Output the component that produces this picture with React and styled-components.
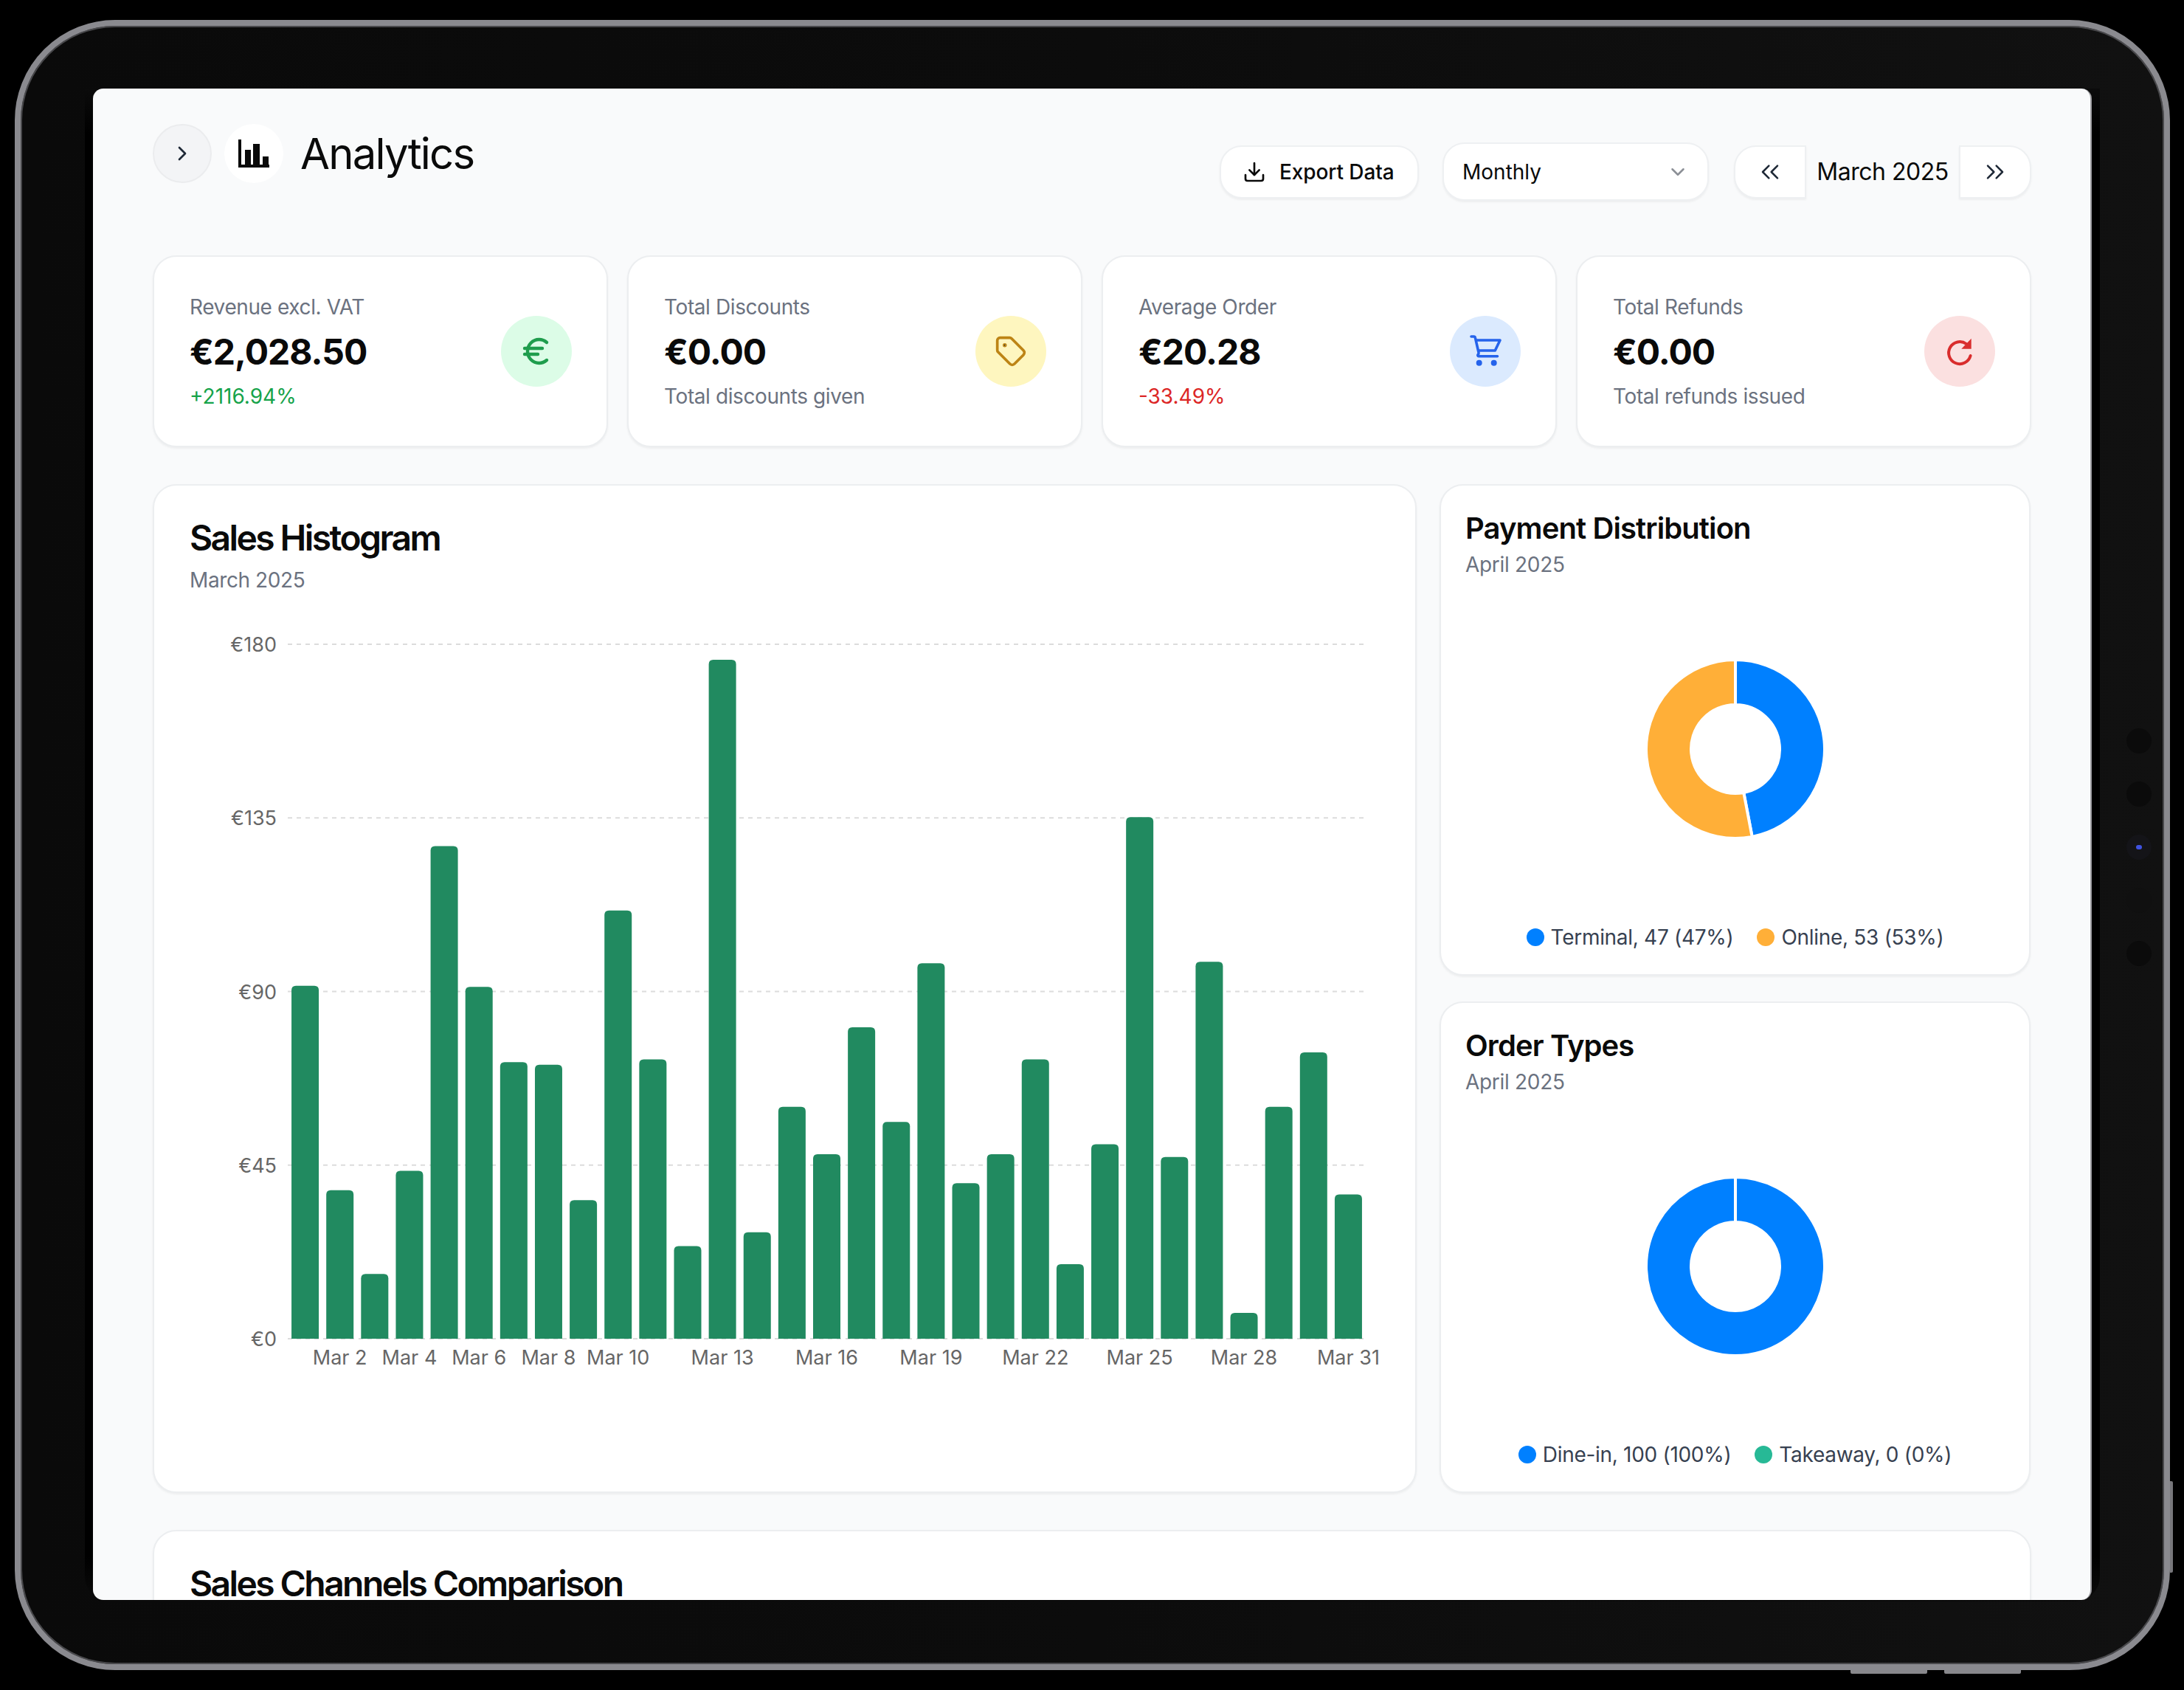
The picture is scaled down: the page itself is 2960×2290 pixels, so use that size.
import React from 'react'
import styled, { createGlobalStyle } from 'styled-components'
import {
    ChevronRight,
    ChevronDown,
    ChevronsLeft,
    ChevronsRight,
    Download,
    Euro,
    Tag,
} from 'lucide-react'

const dailySales = [
    91.5, 38.5, 16.8, 43.5, 127.7, 91.2, 71.7, 71, 35.9, 111, 72.4, 24, 176, 27.6, 60.1, 47.8,
    80.7, 56.2, 97.3, 40.3, 47.8, 72.4, 19.3, 50.4, 135.2, 47.1, 97.7, 6.7, 60.1, 74.2, 37.4,
]
const dayTicks = [2, 4, 6, 8, 10, 13, 16, 19, 22, 25, 28, 31]
const euroTicks = [180, 135, 90, 45, 0]

const BLUE = '#0080ff'
const ORANGE = '#ffaf38'
const TEAL = '#27b996'

const RefreshIcon = () => (
    <svg width="48" height="48" viewBox="0 0 48 48" fill="none">
        <path d="M33 14A15 15 0 1 0 38.6 30" stroke="#d92d2d" strokeWidth="4" strokeLinecap="round" />
        <path d="M39.7 6.7V20.7H26.3Z" fill="#d92d2d" />
    </svg>
)

const CartIcon = () => (
    <svg width="48" height="48" viewBox="0 0 48 48" fill="none" stroke="#2563eb" strokeWidth="3.6" strokeLinecap="round" strokeLinejoin="round">
        <path d="M5 4H8.4a2 2 0 0 1 2 1.6L15 25.5c.3 1.5-.6 2.8-1 3.2-.5.6-.2 2 1 2H40.5" />
        <path d="M11.7 9H44L37.3 23H15" />
        <circle cx="15.7" cy="39.7" r="2.2" fill="#2563eb" />
        <circle cx="35.7" cy="39.7" r="2.2" fill="#2563eb" />
    </svg>
)

const AnalyticsIcon = () => (
    <svg width="42" height="38" viewBox="0 0 42 38" fill="#0a0a0a">
        <path d="M0 0H4V34H42V38H0Z" />
        <rect x="9" y="14" width="8" height="22" />
        <rect x="20" y="6" width="9" height="30" />
        <rect x="33" y="23" width="8" height="13" />
    </svg>
)

const stats = [
    {
        label: 'Revenue excl. VAT',
        value: '€2,028.50',
        note: '+2116.94%',
        tone: 'up',
        bg: '#dcfce7',
        icon: <Euro size={48} color="#1f9d4d" strokeWidth={2.2} />,
    },
    {
        label: 'Total Discounts',
        value: '€0.00',
        note: 'Total discounts given',
        bg: '#fef6bf',
        icon: <Tag size={44} color="#bd8415" />,
    },
    {
        label: 'Average Order',
        value: '€20.28',
        note: '-33.49%',
        tone: 'down',
        bg: '#dbeafe',
        icon: <CartIcon />,
    },
    {
        label: 'Total Refunds',
        value: '€0.00',
        note: 'Total refunds issued',
        bg: '#fbe0e0',
        icon: <RefreshIcon />,
    },
]

const SalesChart = () => {
    const left = 133
    const right = 1594
    const top = 52
    const bottom = 993
    const band = (right - left) / dailySales.length
    const barWidth = 37
    const toY = v => bottom - (v / 180) * (bottom - top)
    const center = day => left + band * (day - 0.5)

    return (
        <ChartSvg viewBox="0 0 1612 1060">
            {euroTicks.map(t => (
                <g key={t}>
                    <line
                        x1={left}
                        x2={right}
                        y1={toY(t)}
                        y2={toY(t)}
                        stroke="#dcdcdc"
                        strokeWidth="2"
                        strokeDasharray="6 6"
                    />
                    <text x={118} y={toY(t) + 10} textAnchor="end">
                        €{t}
                    </text>
                </g>
            ))}
            {dailySales.map((v, i) => {
                const x = center(i + 1) - barWidth / 2
                const y = toY(v)
                return (
                    <path
                        key={i}
                        fill="#218a60"
                        d={`M${x} ${bottom}V${y + 6}Q${x} ${y} ${x + 6} ${y}H${x + barWidth - 6}Q${x + barWidth} ${y} ${x + barWidth} ${y + 6}V${bottom}Z`}
                    />
                )
            })}
            {dayTicks.map(d => (
                <text key={d} x={center(d)} y={bottom + 35} textAnchor="middle">
                    Mar {d}
                </text>
            ))}
        </ChartSvg>
    )
}

const Donut = ({ slices }) => {
    const total = slices.reduce((sum, s) => sum + s.value, 0)
    const point = (r, a) => {
        const rad = (a - 90) * (Math.PI / 180)
        return `${120 + r * Math.cos(rad)} ${120 + r * Math.sin(rad)}`
    }
    let angle = 0

    return (
        <svg width="240" height="240" viewBox="0 0 240 240">
            {slices
                .filter(s => s.value > 0)
                .map(s => {
                    const sweep = Math.min((s.value / total) * 360, 359.99)
                    const start = angle
                    const end = angle + sweep
                    angle = end
                    const big = sweep > 180 ? 1 : 0
                    return (
                        <path
                            key={s.name}
                            fill={s.color}
                            stroke="#fff"
                            strokeWidth="4"
                            d={`M${point(121, start)}A121 121 0 ${big} 1 ${point(121, end)}L${point(60, end)}A60 60 0 ${big} 0 ${point(60, start)}Z`}
                        />
                    )
                })}
        </svg>
    )
}

const PieCard = ({ title, slices }) => {
    const total = slices.reduce((sum, s) => sum + s.value, 0)

    return (
        <SideCard>
            <SideTitle>{title}</SideTitle>
            <SideDate>April 2025</SideDate>
            <DonutArea>
                <Donut slices={slices} />
            </DonutArea>
            <Legend>
                {slices.map(s => (
                    <LegendItem key={s.name}>
                        <Dot $color={s.color} />
                        {s.name}, {s.value} ({Math.round((s.value / total) * 100)}%)
                    </LegendItem>
                ))}
            </Legend>
        </SideCard>
    )
}

const App = () => (
    <Page>
        <GlobalStyle />
        <Device>
            <ScreenRing>
                <Screen>
                    <Header>
                        <TitleGroup>
                            <CollapseButton>
                                <ChevronRight size={32} color="#1f2937" />
                            </CollapseButton>
                            <TitleIcon>
                                <AnalyticsIcon />
                            </TitleIcon>
                            <PageTitle>Analytics</PageTitle>
                        </TitleGroup>
                        <Controls>
                            <ExportButton>
                                <Download size={32} />
                                Export Data
                            </ExportButton>
                            <PeriodSelect>
                                Monthly
                                <ChevronDown size={30} color="#8b8f96" />
                            </PeriodSelect>
                            <DatePager>
                                <PagerButton $side="left">
                                    <ChevronsLeft size={40} color="#1f2937" strokeWidth={1.5} />
                                </PagerButton>
                                <PagerLabel>March 2025</PagerLabel>
                                <PagerButton $side="right">
                                    <ChevronsRight size={40} color="#1f2937" strokeWidth={1.5} />
                                </PagerButton>
                            </DatePager>
                        </Controls>
                    </Header>

                    <StatGrid>
                        {stats.map(s => (
                            <StatCard key={s.label}>
                                <div>
                                    <StatLabel>{s.label}</StatLabel>
                                    <StatValue>{s.value}</StatValue>
                                    <StatNote $tone={s.tone}>{s.note}</StatNote>
                                </div>
                                <StatIcon $bg={s.bg}>{s.icon}</StatIcon>
                            </StatCard>
                        ))}
                    </StatGrid>

                    <MainGrid>
                        <WideCard>
                            <CardTitle>Sales Histogram</CardTitle>
                            <CardDate>March 2025</CardDate>
                            <SalesChart />
                        </WideCard>
                        <SideColumn>
                            <PieCard
                                title="Payment Distribution"
                                slices={[
                                    { name: 'Terminal', value: 47, color: BLUE },
                                    { name: 'Online', value: 53, color: ORANGE },
                                ]}
                            />
                            <PieCard
                                title="Order Types"
                                slices={[
                                    { name: 'Dine-in', value: 100, color: BLUE },
                                    { name: 'Takeaway', value: 0, color: TEAL },
                                ]}
                            />
                        </SideColumn>
                    </MainGrid>

                    <ChannelsCard>
                        <CardTitle>Sales Channels Comparison</CardTitle>
                    </ChannelsCard>
                </Screen>
            </ScreenRing>
            <Sensors>
                <Sensor />
                <Sensor />
                <SensorLight />
                <Sensor $faint />
                <Sensor />
            </Sensors>
            <SideKey />
            <BottomKeys>
                <BottomKey />
                <BottomKey />
            </BottomKeys>
        </Device>
    </Page>
)

const GlobalStyle = createGlobalStyle`
    html, body {
        margin: 0;
        background: #000;
    }
    * {
        box-sizing: border-box;
    }
    body {
        font-family: Inter, "Liberation Sans", sans-serif;
        color: #0a0a0a;
    }
`

const Page = styled.div`
    width: 2960px;
    height: 2290px;
    padding: 27px 19px 27px 20px;
    overflow: hidden;
    background: #000;
`

const Device = styled.div`
    position: relative;
    width: 2921px;
    height: 2236px;
    padding: 85px 87px 85px 87px;
    border: 8px solid #8a8a8f;
    border-radius: 136px;
    background: linear-gradient(90deg, #0a0a0a, #0c0c0c 50%, #111);
    box-shadow: inset 0 0 0 2px #48484b;
`

const ScreenRing = styled.div`
    height: 2050px;
    padding: 0 11px;
    border-radius: 0 0 34px 34px;
    background: linear-gradient(#0b0b0b, #000 3%, #000 97%, #0b0b0b);
`

const Screen = styled.div`
    height: 2048px;
    padding: 48px 80px 0 81px;
    overflow: hidden;
    border-right: 2px solid #9a9a9e;
    border-radius: 14px;
    background: #f9fafb;
`

const Sensors = styled.div`
    position: absolute;
    top: 952px;
    right: 17px;
    display: flex;
    flex-direction: column;
    align-items: center;
    gap: 38px;
`

const Sensor = styled.div`
    width: 34px;
    height: 34px;
    border-radius: 50%;
    background: ${p => (p.$faint ? '#101010' : '#0b0b0b')};
`

const SensorLight = styled(Sensor)`
    display: flex;
    align-items: center;
    justify-content: center;
    background: #141418;
    &::after {
        content: '';
        width: 8px;
        height: 6px;
        border-radius: 3px;
        background: #3f52e0;
    }
`

const SideKey = styled.div`
    position: absolute;
    top: 1972px;
    right: -12px;
    width: 4px;
    height: 124px;
    border-radius: 0 2px 2px 0;
    background: #77777b;
`

const BottomKeys = styled.div`
    position: absolute;
    bottom: -13px;
    left: 2480px;
    display: flex;
    gap: 23px;
`

const BottomKey = styled.div`
    width: 104px;
    height: 5px;
    border-radius: 0 0 2px 2px;
    background: #88888c;
`

const Header = styled.div`
    display: flex;
    justify-content: space-between;
    align-items: flex-start;
    margin-bottom: 74px;
`

const TitleGroup = styled.div`
    display: flex;
    align-items: center;
    gap: 17px;
`

const CollapseButton = styled.div`
    display: flex;
    align-items: center;
    justify-content: center;
    width: 80px;
    height: 80px;
    border: 2px solid #ebecee;
    border-radius: 50%;
    background: #f3f4f6;
`

const TitleIcon = styled.div`
    display: flex;
    align-items: center;
    justify-content: center;
    width: 80px;
    height: 80px;
    border-radius: 50%;
    background: #fff;
`

const PageTitle = styled.h1`
    margin: 0 0 0 6px;
    font-size: 58px;
    font-weight: 400;
    line-height: 80px;
    letter-spacing: -1.8px;
`

const Controls = styled.div`
    display: flex;
    align-items: center;
    gap: 32px;
    margin-top: 25px;
`

const ExportButton = styled.div`
    display: flex;
    align-items: center;
    gap: 18px;
    width: 270px;
    height: 72px;
    padding-left: 29px;
    border: 2px solid #eef0f2;
    border-radius: 30px;
    background: #fff;
    box-shadow: 0 2px 3px rgba(0, 0, 0, 0.05);
    font-size: 28px;
    font-weight: 500;
    letter-spacing: -0.1px;
`

const PeriodSelect = styled.div`
    display: flex;
    align-items: center;
    justify-content: space-between;
    width: 361px;
    height: 79px;
    padding: 0 25px;
    border: 2px solid #eef0f2;
    border-radius: 30px;
    background: #fff;
    box-shadow: 0 2px 3px rgba(0, 0, 0, 0.05);
    font-size: 28px;
`

const DatePager = styled.div`
    display: flex;
    align-items: center;
    margin-left: 2px;
`

const PagerButton = styled.div`
    display: flex;
    align-items: center;
    justify-content: center;
    width: 98px;
    height: 72px;
    border: 2px solid #eef0f2;
    border-radius: ${p => (p.$side === 'left' ? '30px 0 0 30px' : '0 30px 30px 0')};
    background: #fff;
    box-shadow: 0 2px 3px rgba(0, 0, 0, 0.05);
`

const PagerLabel = styled.div`
    width: 207px;
    font-size: 32px;
    letter-spacing: -0.5px;
    text-align: center;
`

const StatGrid = styled.div`
    display: grid;
    grid-template-columns: repeat(4, 1fr);
    gap: 26px;
`

const Card = styled.div`
    border: 2px solid #eceef0;
    border-radius: 32px;
    background: #fff;
    box-shadow: 0 2px 3px rgba(0, 0, 0, 0.05);
`

const StatCard = styled(Card)`
    display: flex;
    align-items: center;
    justify-content: space-between;
    height: 260px;
    padding: 0 47px 0 48px;
`

const StatLabel = styled.div`
    font-size: 28px;
    line-height: 40px;
    letter-spacing: -0.4px;
    color: #6b7280;
`

const StatValue = styled.div`
    margin-top: 9px;
    font-size: 48px;
    font-weight: 700;
    line-height: 64px;
    letter-spacing: -1px;
`

const StatNote = styled.div`
    margin-top: 8px;
    font-size: 28px;
    line-height: 40px;
    letter-spacing: ${p => (p.$tone ? '0' : '-0.4px')};
    color: ${p => (p.$tone === 'up' ? '#16a34a' : p.$tone === 'down' ? '#dc2626' : '#6b7280')};
`

const StatIcon = styled.div`
    display: flex;
    align-items: center;
    justify-content: center;
    width: 96px;
    height: 96px;
    border-radius: 50%;
    background: ${p => p.$bg};
`

const MainGrid = styled.div`
    display: grid;
    grid-template-columns: 1713px 801px;
    gap: 31px;
    margin-top: 50px;
`

const WideCard = styled(Card)`
    height: 1367px;
    padding: 43px 48px 0;
`

const CardTitle = styled.h2`
    margin: 0;
    font-size: 48px;
    font-weight: 600;
    line-height: 56px;
    letter-spacing: -2.6px;
`

const CardDate = styled.div`
    margin-top: 9px;
    font-size: 28px;
    line-height: 40px;
    letter-spacing: -0.4px;
    color: #6b7280;
`

const ChartSvg = styled.svg`
    display: block;
    width: 1612px;
    height: 1060px;
    margin-top: 15px;
    text {
        font-family: Inter, sans-serif;
        font-size: 27px;
        fill: #666;
    }
`

const SideColumn = styled.div`
    display: flex;
    flex-direction: column;
    gap: 35px;
`

const SideCard = styled(Card)`
    display: flex;
    flex: 1;
    flex-direction: column;
    padding: 34px 33px 30px;
`

const SideTitle = styled.h3`
    margin: 0;
    font-size: 40px;
    font-weight: 600;
    line-height: 48px;
    letter-spacing: -0.9px;
`

const SideDate = styled.div`
    margin-top: 7px;
    font-size: 28px;
    line-height: 36px;
    letter-spacing: -0.3px;
    color: #6b7280;
`

const DonutArea = styled.div`
    display: flex;
    flex: 1;
    align-items: center;
    justify-content: center;
    padding-bottom: 3px;
`

const Legend = styled.div`
    display: flex;
    justify-content: center;
    gap: 32px;
`

const LegendItem = styled.div`
    display: flex;
    align-items: center;
    gap: 9px;
    font-size: 28px;
    line-height: 40px;
    letter-spacing: -0.3px;
    color: #374151;
`

const Dot = styled.span`
    width: 24px;
    height: 24px;
    border-radius: 50%;
    background: ${p => p.$color};
`

const ChannelsCard = styled(Card)`
    height: 400px;
    margin-top: 50px;
    padding: 43px 48px 0;
`

export default App
